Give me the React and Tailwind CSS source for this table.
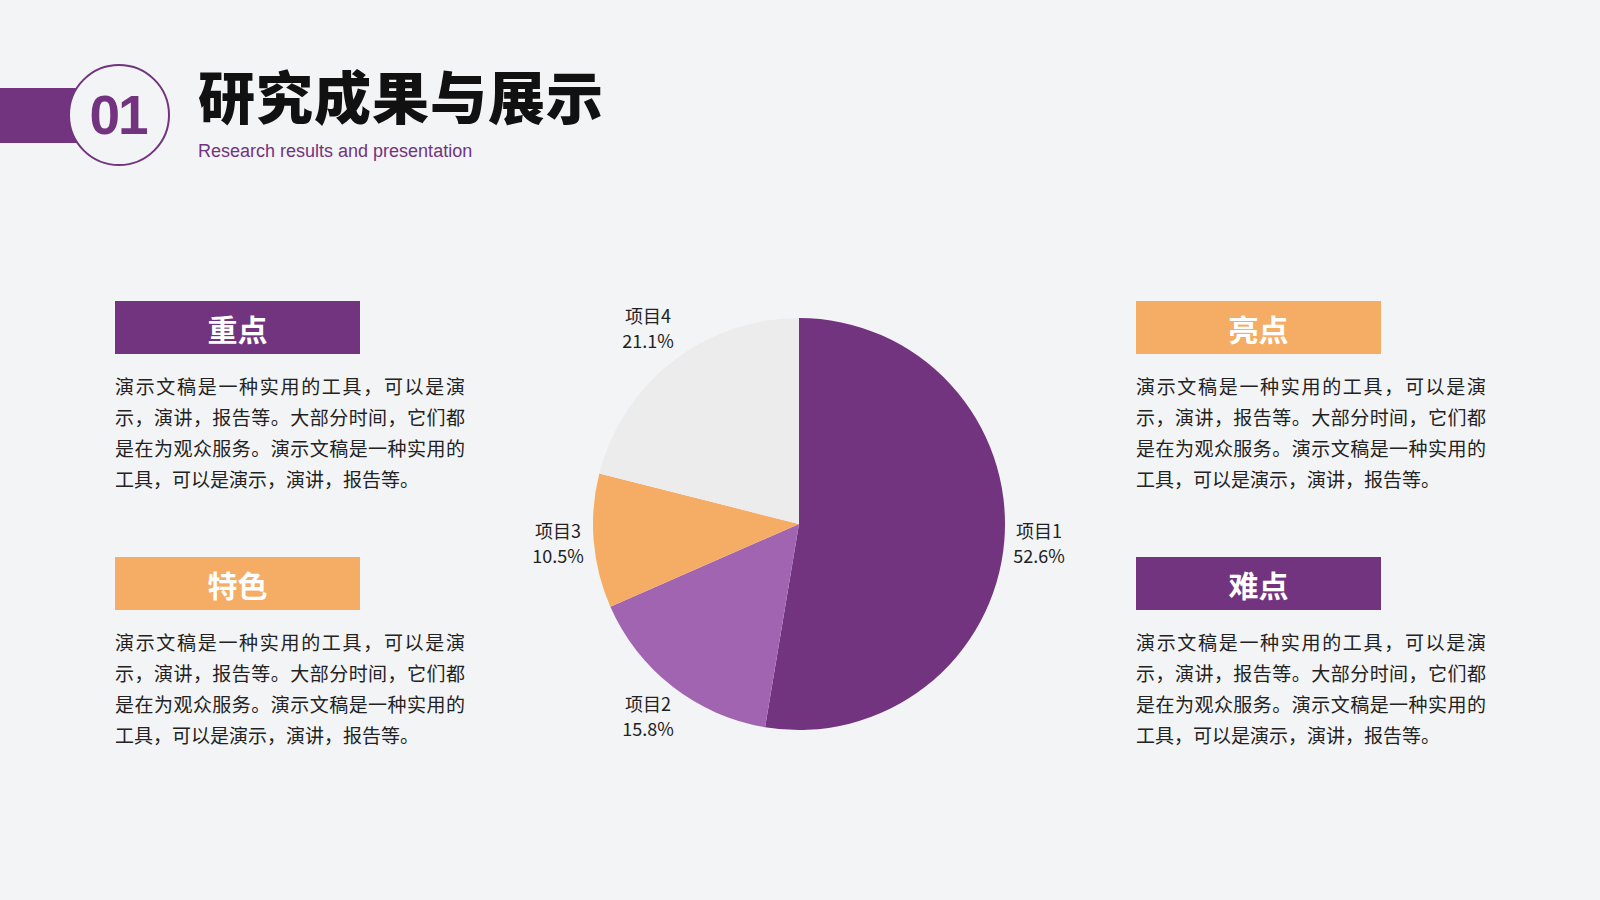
import React from "react";

const BODY =
  "演示文稿是一种实用的工具，可以是演示，演讲，报告等。大部分时间，它们都是在为观众服务。演示文稿是一种实用的工具，可以是演示，演讲，报告等。";

function Card({ title, color, className = "" }) {
  return (
    <div className={"flex flex-col " + className}>
      <div
        className={
          "w-[245px] h-[53px] flex items-center justify-center text-white text-[30px] font-bold leading-none " +
          color
        }
      >
        {title}
      </div>
      <p className="mt-[16px] w-[350px] text-[19px] leading-[31px] text-[#222222] text-justify">
        {BODY}
      </p>
    </div>
  );
}

function Pie() {
  const cx = 300;
  const cy = 230;
  const r = 206;
  const data = [
    { v: 10, c: "#72337f" },
    { v: 3, c: "#a164b1" },
    { v: 2, c: "#f5ad66" },
    { v: 4, c: "#ececec" },
  ];
  const total = data.reduce((s, d) => s + d.v, 0);
  let acc = 0;
  const slices = data.map((d, i) => {
    const a0 = (acc / total) * Math.PI * 2 - Math.PI / 2;
    acc += d.v;
    const a1 = (acc / total) * Math.PI * 2 - Math.PI / 2;
    const x0 = cx + r * Math.cos(a0);
    const y0 = cy + r * Math.sin(a0);
    const x1 = cx + r * Math.cos(a1);
    const y1 = cy + r * Math.sin(a1);
    const large = a1 - a0 > Math.PI ? 1 : 0;
    return (
      <path
        key={i}
        d={`M ${cx} ${cy} L ${x0} ${y0} A ${r} ${r} 0 ${large} 1 ${x1} ${y1} Z`}
        fill={d.c}
      />
    );
  });
  const labels = [
    { x: 540, y: 239, a: "项目1", b: "52.6%" },
    { x: 149, y: 412, a: "项目2", b: "15.8%" },
    { x: 59, y: 239, a: "项目3", b: "10.5%" },
    { x: 149, y: 24, a: "项目4", b: "21.1%" },
  ];
  return (
    <svg width="600" height="460" viewBox="0 0 600 460" className="block">
      {slices}
      {labels.map((l, i) => (
        <g key={i} fill="#222222" fontSize="18" textAnchor="middle" dominantBaseline="middle">
          <text x={l.x} y={l.y}>{l.a}</text>
          <text x={l.x} y={l.y + 25}>{l.b}</text>
        </g>
      ))}
    </svg>
  );
}

export default function App() {
  return (
    <div
      className="w-[1600px] h-[900px] bg-[#f3f4f6] overflow-hidden"
      style={{ fontFamily: '"Noto Sans CJK SC", "Noto Sans", sans-serif' }}
    >
      <header className="flex items-start pt-[64px]">
        <div className="flex items-center">
          <div className="w-[80px] h-[55px] bg-[#72337f]" />
          <div className="relative -ml-[12px] w-[102px] h-[102px] rounded-full border-2 border-[#72337f] bg-[#f3f4f6] flex items-center justify-center">
            <span
              className="text-[#72337f] text-[55px] font-bold leading-none tracking-[-2px] pr-[2px]"
              style={{ fontFamily: '"Liberation Sans", Arial, sans-serif' }}
            >
              01
            </span>
          </div>
        </div>
        <div className="ml-[28px] mt-[2px] flex flex-col">
          <h1 className="text-[57px] font-black leading-none text-[#111111] tracking-[1px]">
            研究成果与展示
          </h1>
          <p
            className="mt-[16px] text-[18px] leading-[24px] text-[#72337f]"
            style={{ fontFamily: '"Liberation Sans", Arial, sans-serif' }}
          >
            Research results and presentation
          </p>
        </div>
      </header>

      <main className="flex items-start pl-[115px] mt-[135px]">
        <div className="flex flex-col gap-[63px]">
          <Card title="重点" color="bg-[#72337f]" />
          <Card title="特色" color="bg-[#f5ad66]" />
        </div>
        <div className="ml-[34px] -mt-[7px]">
          <Pie />
        </div>
        <div className="ml-[37px] flex flex-col gap-[63px]">
          <Card title="亮点" color="bg-[#f5ad66]" />
          <Card title="难点" color="bg-[#72337f]" />
        </div>
      </main>
    </div>
  );
}
